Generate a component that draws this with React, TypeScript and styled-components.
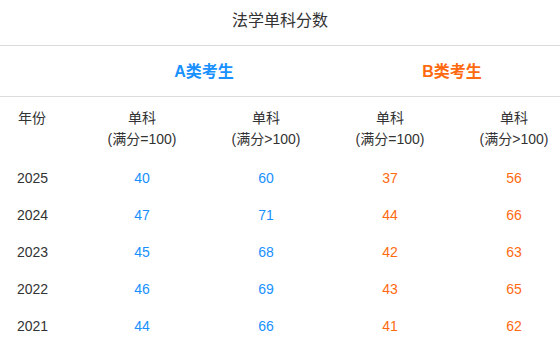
import React from "react";
import styled, { createGlobalStyle } from "styled-components";

const GlobalStyle = createGlobalStyle`
  body {
    margin: 0;
    background: #fff;
    font-family: "Liberation Sans", Arial, "Noto Sans CJK SC", sans-serif;
    color: #333;
    overflow: hidden;
  }
`;

const BLUE = "#1890ff";
const ORANGE = "#ff6a10";

const Container = styled.div`
  width: 560px;
  overflow: hidden;
  background: #fff;
`;
const Title = styled.div`
  height: 41px;
  line-height: 41px;
  padding-bottom: 4px;
  text-align: center;
  font-size: 16px;
  color: #333;
  border-bottom: 1px solid #dcdcdc;
`;
const Grid = styled.div`
  display: grid;
  grid-template-columns: 80px repeat(4, 124px);
`;
const GroupRow = styled(Grid)`
  height: 48px;
  padding-bottom: 2px;
  border-bottom: 1px solid #dcdcdc;
  align-items: center;
`;
const GroupCell = styled.div<{ $color: string }>`
  grid-column: span 2;
  text-align: center;
  font-size: 16px;
  font-weight: bold;
  color: ${(p) => p.$color};
`;
const HeadRow = styled(Grid)`
  padding: 11px 0 10px;
  font-size: 14px;
  line-height: 21px;
  color: #333;
`;
const YearHead = styled.div`
  padding-left: 18px;
`;
const HeadCell = styled.div`
  text-align: center;
`;
const DataRow = styled(Grid)`
  height: 37px;
  line-height: 37px;
  font-size: 14px;
`;
const YearCell = styled.div`
  padding-left: 17px;
  color: #333;
`;
const ScoreCell = styled.div<{ $color: string }>`
  text-align: center;
  color: ${(p) => p.$color};
`;

const rows = [
  { year: 2025, a1: 40, a2: 60, b1: 37, b2: 56 },
  { year: 2024, a1: 47, a2: 71, b1: 44, b2: 66 },
  { year: 2023, a1: 45, a2: 68, b1: 42, b2: 63 },
  { year: 2022, a1: 46, a2: 69, b1: 43, b2: 65 },
  { year: 2021, a1: 44, a2: 66, b1: 41, b2: 62 },
];

const heads = ["(满分=100)", "(满分>100)", "(满分=100)", "(满分>100)"];

export default function App() {
  return (
    <Container>
      <GlobalStyle />
      <Title>法学单科分数</Title>
      <GroupRow>
        <div />
        <GroupCell $color={BLUE}>A类考生</GroupCell>
        <GroupCell $color={ORANGE}>B类考生</GroupCell>
      </GroupRow>
      <HeadRow>
        <YearHead>年份</YearHead>
        {heads.map((h, i) => (
          <HeadCell key={i}>
            单科
            <br />
            {h}
          </HeadCell>
        ))}
      </HeadRow>
      {rows.map((r) => (
        <DataRow key={r.year}>
          <YearCell>{r.year}</YearCell>
          <ScoreCell $color={BLUE}>{r.a1}</ScoreCell>
          <ScoreCell $color={BLUE}>{r.a2}</ScoreCell>
          <ScoreCell $color={ORANGE}>{r.b1}</ScoreCell>
          <ScoreCell $color={ORANGE}>{r.b2}</ScoreCell>
        </DataRow>
      ))}
    </Container>
  );
}
